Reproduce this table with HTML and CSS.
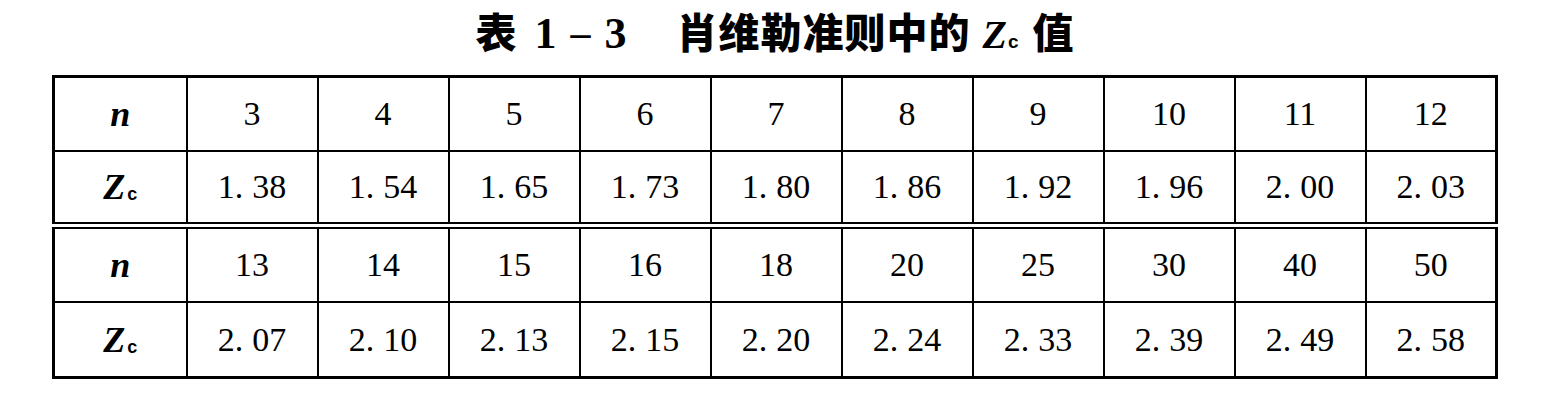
FILE: index.html
```html
<!DOCTYPE html>
<html lang="zh">
<head>
<meta charset="utf-8">
<link rel="stylesheet" href="styles.css">
</head>
<body>
<div class="page">
  <h1 class="title"><span class="cjk">表</span><span class="num one">1</span><span class="dash">–</span><span class="num three">3</span><span class="cjk name">肖维勒准则中的</span><span class="zc">Z<sub>c</sub></span><span class="cjk last">值</span></h1>
  <table class="grid">
    <colgroup>
      <col class="c-head">
      <col><col><col><col><col><col><col><col><col><col>
    </colgroup>
    <tbody>
      <tr><th><i>n</i></th><td>3</td><td>4</td><td>5</td><td>6</td><td>7</td><td>8</td><td>9</td><td>10</td><td>11</td><td>12</td></tr>
      <tr class="split"><th><i>Z</i><sub>c</sub></th><td>1<span class="pt">.</span>38</td><td>1<span class="pt">.</span>54</td><td>1<span class="pt">.</span>65</td><td>1<span class="pt">.</span>73</td><td>1<span class="pt">.</span>80</td><td>1<span class="pt">.</span>86</td><td>1<span class="pt">.</span>92</td><td>1<span class="pt">.</span>96</td><td>2<span class="pt">.</span>00</td><td>2<span class="pt">.</span>03</td></tr>
      <tr><th><i>n</i></th><td>13</td><td>14</td><td>15</td><td>16</td><td>18</td><td>20</td><td>25</td><td>30</td><td>40</td><td>50</td></tr>
      <tr class="end"><th><i>Z</i><sub>c</sub></th><td>2<span class="pt">.</span>07</td><td>2<span class="pt">.</span>10</td><td>2<span class="pt">.</span>13</td><td>2<span class="pt">.</span>15</td><td>2<span class="pt">.</span>20</td><td>2<span class="pt">.</span>24</td><td>2<span class="pt">.</span>33</td><td>2<span class="pt">.</span>39</td><td>2<span class="pt">.</span>49</td><td>2<span class="pt">.</span>58</td></tr>
    </tbody>
  </table>
</div>
</body>
</html>
```
FILE: styles.css
```css
html, body {
  margin: 0;
  padding: 0;
  background: #fff;
  color: #000;
}
.page {
  width: 1446px;
  margin-left: 52px;
  padding-top: 0;
}
.title {
  margin: 0;
  height: 75px;
  text-align: center;
  font-size: 41px;
  line-height: 60px;
  font-weight: 900;
  white-space: nowrap;
}
.title .cjk {
  font-family: "Noto Sans CJK SC", sans-serif;
  font-weight: 900;
  letter-spacing: 1px;
}
.title .num {
  font-family: "Liberation Serif", serif;
  font-weight: 700;
  font-size: 44px;
}
.title .one {
  margin-left: 17px;
}
.title .dash {
  font-family: "Liberation Serif", serif;
  font-weight: 700;
  font-size: 40px;
  margin: 0 14px;
  position: relative;
  top: -2px;
}
.title .name {
  margin-left: 50px;
}
.title .zc {
  font-family: "Liberation Serif", serif;
  font-style: italic;
  font-weight: 700;
  font-size: 40px;
  margin: 0 14px 0 12px;
}
.title .zc sub {
  font-family: "Liberation Sans", sans-serif;
  font-style: normal;
  font-size: 19px;
  vertical-align: 0;
  margin-left: 1px;
}
.grid {
  width: 1446px;
  table-layout: fixed;
  border-collapse: collapse;
  border: 3px solid #000;
}
.grid col.c-head {
  width: 133px;
}
.grid th, .grid td {
  height: 72px;
  padding: 0;
  border: 2px solid #000;
  text-align: center;
  vertical-align: middle;
  font-family: "Liberation Serif", serif;
  font-size: 34px;
  font-weight: 400;
  line-height: 1;
}
.grid tr:first-child th, .grid tr:first-child td {
  border-top: 3px solid #000;
}
.grid tr:last-child th, .grid tr:last-child td {
  border-bottom: 3px solid #000;
}
.grid th:first-child {
  border-left: 3px solid #000;
}
.grid td:last-child {
  border-right: 3px solid #000;
}
.grid tr.split th, .grid tr.split td {
  height: 70px;
  border-bottom: 7px double #000;
}
.grid tr.end th, .grid tr.end td {
  height: 73px;
}
.grid th {
  font-weight: 700;
}
.grid th i {
  font-style: italic;
  font-weight: 700;
  font-size: 36px;
}
.grid th sub {
  font-family: "Liberation Sans", sans-serif;
  font-size: 18px;
  font-weight: 700;
  vertical-align: -1px;
  margin-left: 2px;
}
.pt {
  margin-right: 9px;
}
```
